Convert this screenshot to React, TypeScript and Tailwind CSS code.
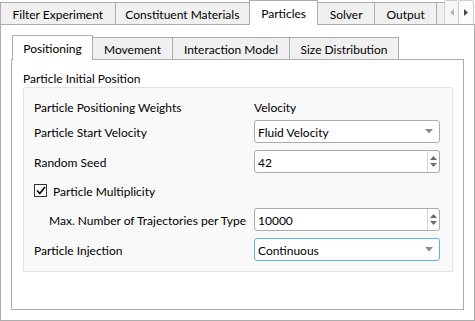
import React from "react";

function TopTab({ label, w, selected }: { label: string; w: string; selected?: boolean }) {
  if (selected) {
    return (
      <div
        className={`${w} relative z-10 flex h-[25px] items-center justify-center border border-b-0 border-[#acacac] bg-white pt-[1px]`}
      >
        {label}
      </div>
    );
  }
  return (
    <div
      className={`${w} -ml-px mt-[2px] flex h-[23px] items-center justify-center border border-[#acacac] bg-[#f0f0f0] pt-[3px] first:ml-0`}
    >
      {label}
    </div>
  );
}

function InnerTab({ label, w, selected }: { label: string; w: string; selected?: boolean }) {
  if (selected) {
    return (
      <div
        className={`${w} relative z-10 flex h-[25px] items-center justify-center border border-b-0 border-[#acacac] bg-white pt-[1px]`}
      >
        {label}
      </div>
    );
  }
  return (
    <div
      className={`${w} -ml-px mt-[2px] flex h-[23px] items-center justify-center border border-[#acacac] bg-[#f0f0f0] pt-[3px]`}
    >
      {label}
    </div>
  );
}

function Combo({ value, focused }: { value: string; focused?: boolean }) {
  return (
    <div
      className={`flex h-[23px] w-[186px] items-center justify-between rounded-[3px] border bg-white pl-[3px] pr-[6px] ${
        focused ? "border-[#5bb4e8]" : "border-[#acacac]"
      }`}
    >
      <span className="pt-[2px]">{value}</span>
      <svg width="8" height="5" viewBox="0 0 8 5">
        <path d="M0 0h8L4 4.5z" fill="#8a8a8a" />
      </svg>
    </div>
  );
}

function Spin({ value }: { value: string }) {
  return (
    <div className="flex h-[23px] w-[186px] items-stretch rounded-[3px] border border-[#acacac] bg-white">
      <span className="flex flex-1 items-center pl-[3px] pt-[3px]">{value}</span>
      <div className="flex w-[12px] flex-col items-center justify-center gap-[3px] border-l border-[#d4d4d4]">
        <svg width="7" height="4" viewBox="0 0 7 4">
          <path d="M0 4h7L3.5 0z" fill="#6e6e6e" />
        </svg>
        <svg width="7" height="4" viewBox="0 0 7 4">
          <path d="M0 0h7L3.5 4z" fill="#6e6e6e" />
        </svg>
      </div>
    </div>
  );
}

export default function App() {
  return (
    <div className="flex h-[321px] w-[475px] flex-col bg-white font-['Lato',sans-serif] text-[12px] leading-none text-black">
      <div className="flex h-[25px] items-start">
        <TopTab label="Filter Experiment" w="w-[116px]" />
        <TopTab label="Constituent Materials" w="w-[136px]" />
        <div className="-ml-px">
          <TopTab label="Particles" w="w-[69px]" selected />
        </div>
        <div className="-ml-px flex">
          <TopTab label="Solver" w="w-[58px]" />
          <TopTab label="Output" w="w-[63px]" />
          <div className="-ml-px mt-[2px] h-[23px] w-[8px] border-y border-l border-[#acacac] bg-[#f0f0f0]" />
        </div>
        <div className="flex h-[25px] w-[31px]">
          <div className="flex h-[25px] w-[15px] items-center justify-center rounded-[2px] border border-[#cfcfcf] bg-[#f7f7f7]">
            <svg width="4" height="7" viewBox="0 0 4 7">
              <path d="M4 0v7L0 3.5z" fill="#b5b5b5" />
            </svg>
          </div>
          <div className="-ml-px flex h-[25px] w-[16px] items-center justify-center rounded-[2px] border border-[#cfcfcf] bg-[#fcfcfc]">
            <svg width="4" height="7" viewBox="0 0 4 7">
              <path d="M0 0v7L4 3.5z" fill="#4a4a4a" />
            </svg>
          </div>
        </div>
      </div>

      <div className="-mt-px flex flex-1 flex-col border border-[#acacac] px-[10px] pb-[10px] pt-[10px]">
        <div className="flex h-[25px] items-start pl-px">
          <InnerTab label="Positioning" w="w-[81px]" selected />
          <InnerTab label="Movement" w="w-[81px]" />
          <InnerTab label="Interaction Model" w="w-[118px]" />
          <InnerTab label="Size Distribution" w="w-[110px]" />
        </div>

        <div className="-mt-px flex flex-1 flex-col border border-[#acacac] bg-white pl-[11px] pr-[10px]">
          <div className="flex h-[27px] items-end pb-[2px]">Particle Initial Position</div>

          <div className="flex flex-col rounded-[2px] border border-[#e3e3e3] bg-[#f9f9f9] pb-[10px] pl-[10px] pr-[11px] pt-[10px]">
            <div className="grid grid-cols-[220px_186px] items-center whitespace-nowrap">
              <div className="flex h-[16px] items-center pt-[3px]">Particle Positioning Weights</div>
              <div className="flex h-[16px] items-center pt-[3px]">Velocity</div>

              <div className="mt-[6px] flex h-[23px] items-center pt-[3px]">Particle Start Velocity</div>
              <div className="mt-[6px]">
                <Combo value="Fluid Velocity" />
              </div>

              <div className="mt-[7px] flex h-[23px] items-center pt-[3px]">Random Seed</div>
              <div className="mt-[7px]">
                <Spin value="42" />
              </div>

              <div className="col-span-2 mt-[6px] flex h-[23px] items-center gap-[6px]">
                <div className="flex h-[13px] w-[13px] items-center justify-center border border-[#333333] bg-white">
                  <svg width="10" height="9" viewBox="0 0 10 9">
                    <path d="M1 4.5L3.8 7.5L9 1" fill="none" stroke="#000" strokeWidth="1.6" />
                  </svg>
                </div>
                <span className="pt-[2px]">Particle Multiplicity</span>
              </div>

              <div className="mt-[6px] flex h-[23px] items-center pl-[15px] pt-[3px]">
                Max. Number of Trajectories per Type
              </div>
              <div className="mt-[6px]">
                <Spin value="10000" />
              </div>

              <div className="mt-[7px] flex h-[23px] items-center pt-[3px]">Particle Injection</div>
              <div className="mt-[7px]">
                <Combo value="Continuous" focused />
              </div>
            </div>
          </div>
        </div>
      </div>
    </div>
  );
}
